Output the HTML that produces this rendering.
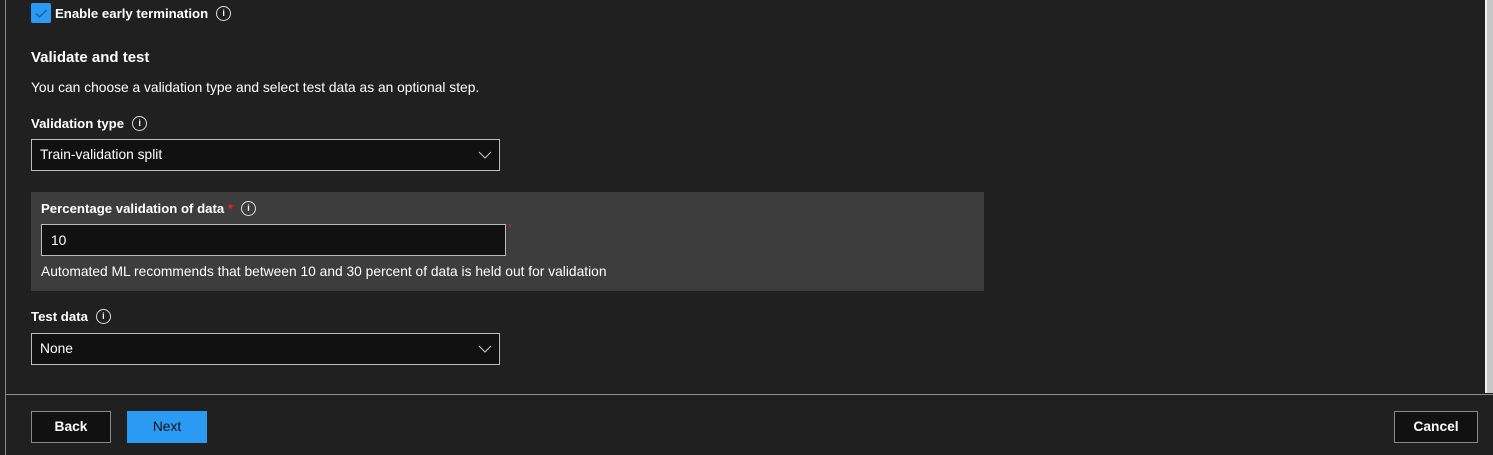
<!DOCTYPE html>
<html><head><style>
body{margin:0;width:1493px;height:455px;background:#202020;position:relative;overflow:hidden;font-family:"Liberation Sans",sans-serif;color:#fff;font-size:13.8px}
.a{position:absolute}
.lbl{font-weight:bold;font-size:13.2px}
.info{display:inline-block;width:13px;height:13px;border:1px solid #ddd;border-radius:50%;font-size:9px;text-align:center;line-height:13px;font-weight:bold;vertical-align:middle;margin-left:8px;margin-top:-2px}
.dd{border:1px solid #bbb;background:#111;box-sizing:border-box}
</style></head><body>
<div class="a" style="left:5px;top:0;width:1px;height:455px;background:#8a8a8a"></div>
<div class="a" style="left:1485px;top:0;width:2px;height:393px;background:#f0f0f0"></div>
<div class="a" style="left:1487px;top:0;width:6px;height:393px;background:#c6c6c6"></div>
<div class="a" style="left:6px;top:394px;width:1487px;height:1px;background:#8a8a8a"></div>

<div class="a" style="left:31px;top:3px;width:20px;height:20px;background:#2b9af3;border-radius:2px"><svg width="20" height="20"><path d="M5 10.5l3.5 3.5 7-7" stroke="#1d5f96" stroke-width="1.3" fill="none"/></svg></div>
<div class="a lbl" style="left:55px;top:6px">Enable early termination<span class="info">i</span></div>

<div class="a" style="left:31px;top:49px;font-size:15px;font-weight:bold">Validate and test</div>
<div class="a" style="left:31px;top:80px">You can choose a validation type and select test data as an optional step.</div>
<div class="a lbl" style="left:31px;top:116px">Validation type<span class="info">i</span></div>
<div class="a dd" style="left:31px;top:139px;width:469px;height:32px"><span class="a" style="left:8px;top:7px">Train-validation split</span><svg class="a" style="left:446px;top:9px" width="14" height="12"><path d="M1 3l6 6 6-6" stroke="#ccc" fill="none"/></svg></div>

<div class="a" style="left:31px;top:192px;width:953px;height:99px;background:#3d3d3d"></div>
<div class="a lbl" style="left:41px;top:201px">Percentage validation of data <span style="color:#e22">*</span><span class="info">i</span></div>
<div class="a dd" style="left:41px;top:224px;width:465px;height:32px"><span class="a" style="left:9px;top:8px">10</span></div>
<div class="a" style="left:508px;top:222px;color:#e22;font-size:9px">*</div>
<div class="a" style="left:41px;top:264px">Automated ML recommends that between 10 and 30 percent of data is held out for validation</div>

<div class="a lbl" style="left:31px;top:309px">Test data<span class="info">i</span></div>
<div class="a dd" style="left:31px;top:333px;width:469px;height:32px"><span class="a" style="left:8px;top:7px">None</span><svg class="a" style="left:446px;top:9px" width="14" height="12"><path d="M1 3l6 6 6-6" stroke="#ccc" fill="none"/></svg></div>

<div class="a dd" style="left:31px;top:411px;width:80px;height:32px;border-color:#888;text-align:center;line-height:30px;font-weight:bold">Back</div>
<div class="a" style="left:127px;top:411px;width:80px;height:32px;background:#2b9af3;color:#111;text-align:center;line-height:32px">Next</div>
<div class="a dd" style="left:1394px;top:411px;width:84px;height:32px;border-color:#888;text-align:center;line-height:30px;font-weight:bold">Cancel</div>
</body></html>
